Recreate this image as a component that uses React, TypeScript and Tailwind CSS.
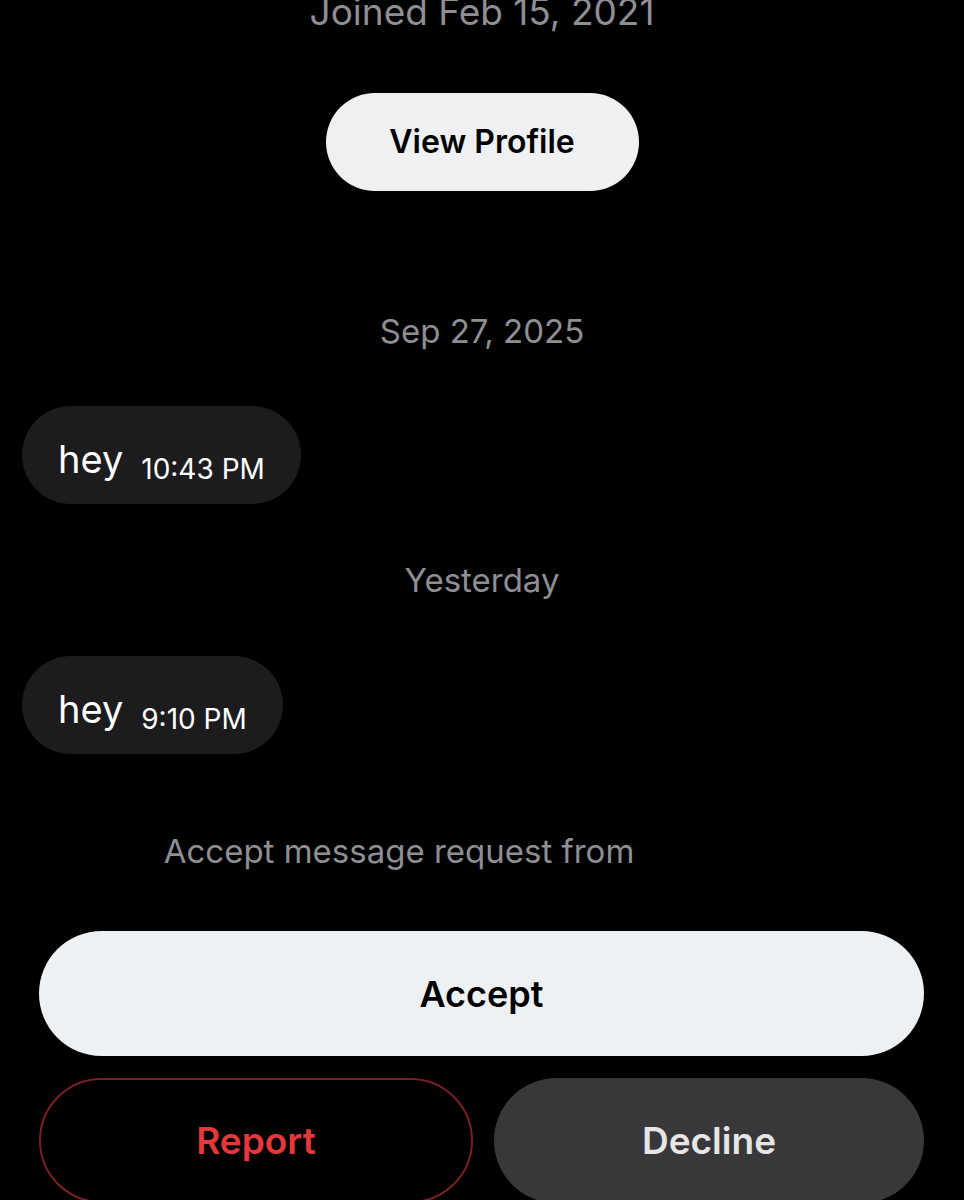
import React from 'react'

type Nachricht = { text: string; zeit: string }

/** Eingehende Nachricht als dunkle Pille: Text + Uhrzeit. */
function Blase({ text, zeit }: Nachricht) {
  return (
    <div className="ml-[22px] flex h-[98px] w-fit items-baseline gap-[18px] rounded-full bg-[#1c1c1e] px-[36px] pt-[29px]">
      <span className="text-[38px] leading-[48px] text-white">{text}</span>
      <span className="translate-y-[6px] text-[28px] leading-[34px] text-white">{zeit}</span>
    </div>
  )
}

/** Datumstrenner zwischen den Nachrichten. */
function Datum({ children, className = '' }: { children: React.ReactNode; className?: string }) {
  return <div className={`text-center text-[33px] leading-[44px] text-[#8e8e93] ${className}`}>{children}</div>
}

export default function App() {
  return (
    <div className="h-[1200px] w-[964px] overflow-hidden bg-black font-['Inter','Liberation_Sans',sans-serif]">
      <div className="mt-[-10px] text-center text-[37px] leading-[44px] text-[#8e8e93]">Joined Feb 15, 2021</div>

      <button className="mx-auto mt-[59px] block h-[98px] w-[313px] rounded-full bg-[#eef0f2] text-[32px] font-semibold text-black">
        View Profile
      </button>

      <Datum className="mt-[118px]">Sep 27, 2025</Datum>
      <div className="mt-[53px]">
        <Blase text="hey" zeit="10:43 PM" />
      </div>

      <Datum className="mt-[54px]">Yesterday</Datum>
      <div className="mt-[54px]">
        <Blase text="hey" zeit="9:10 PM" />
      </div>

      {/* Name des Absenders ist geschwärzt – Platzhalter hält die Zentrierung */}
      <div className="mt-[75px] text-center text-[33px] leading-[44px] text-[#8e8e93]">
        Accept message request from<span className="inline-block w-[166px]" />
      </div>

      <div className="mt-[58px] flex flex-col gap-[22px] pl-[39px] pr-[40px]">
        <button className="h-[125px] w-full shrink-0 rounded-full bg-[#eef1f3] text-[36px] font-semibold text-black">Accept</button>
        <div className="flex shrink-0 gap-[21px]">
          <button className="h-[125px] flex-1 rounded-full border-2 border-[#7a1f22] text-[37px] font-semibold text-[#e5383b]">
            Report
          </button>
          <button className="h-[125px] flex-1 rounded-full bg-[#38383b] text-[37px] font-semibold text-[#e6e6e6]">
            Decline
          </button>
        </div>
      </div>
    </div>
  )
}
